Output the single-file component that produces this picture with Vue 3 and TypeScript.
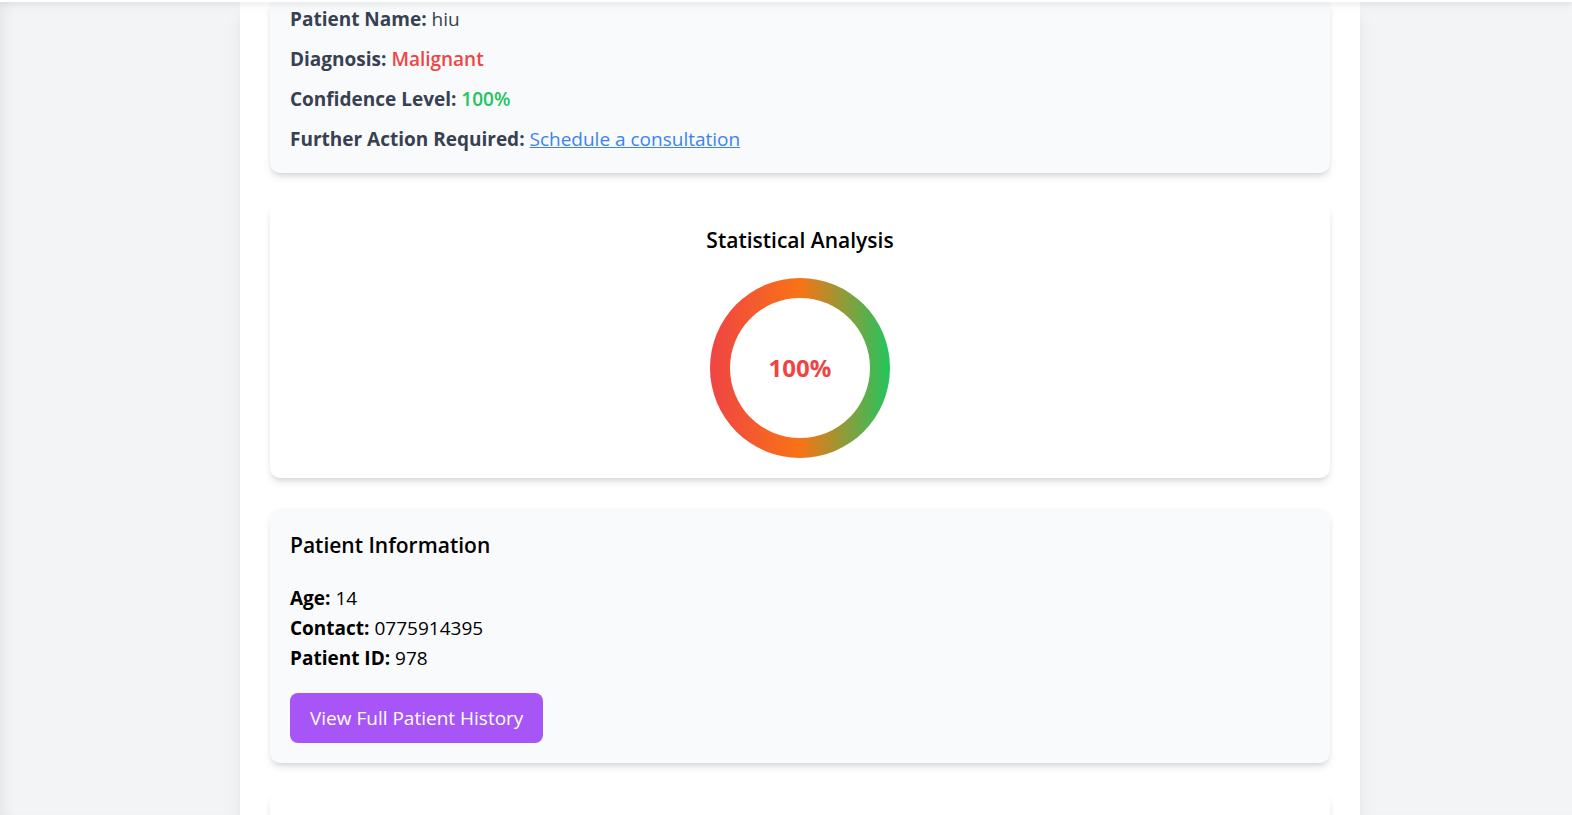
<script setup lang="ts">
interface Detail {
  label: string
  value: string
}

const patientName = 'hiu'
const diagnosis = 'Malignant'
const confidence = 100

const details: Detail[] = [
  { label: 'Age', value: '14' },
  { label: 'Contact', value: '0775914395' },
  { label: 'Patient ID', value: '978' },
]
</script>

<template>
  <div class="page">
    <header class="topbar"></header>
    <main class="content">
      <div class="panel">
        <section class="card tinted result">
          <p><strong>Patient Name:</strong> {{ patientName }}</p>
          <p><strong>Diagnosis:</strong> <span class="malignant">{{ diagnosis }}</span></p>
          <p><strong>Confidence Level:</strong> <span class="confident">{{ confidence }}%</span></p>
          <p><strong>Further Action Required:</strong> <a href="#consultation">Schedule a consultation</a></p>
        </section>

        <section class="card stats">
          <h2>Statistical Analysis</h2>
          <div class="ring">
            <div class="ring-center">{{ confidence }}%</div>
          </div>
        </section>

        <section class="card tinted">
          <h2>Patient Information</h2>
          <p v-for="item in details" :key="item.label">
            <strong>{{ item.label }}:</strong> {{ item.value }}
          </p>
          <button type="button" class="history">View Full Patient History</button>
        </section>

        <section class="card next"></section>
      </div>
    </main>
  </div>
</template>

<style>
body {
  margin: 0;
}
</style>

<style scoped>
.page {
  display: flex;
  flex-direction: column;
  height: 100vh;
  overflow: hidden;
  box-sizing: border-box;
  background: #f3f4f6;
  color: #000;
  font-family: "Segoe UI", "Open Sans", "Noto Sans", sans-serif;
  font-size: 19px;
  line-height: 30px;
}

.topbar {
  position: relative;
  flex: none;
  height: 2px;
  background: #fff;
  box-shadow: 0 0 15px rgba(0, 0, 0, 0.14), 0 2px 5px rgba(0, 0, 0, 0.12);
  z-index: 1;
}

.content {
  flex: 1;
  display: flex;
  justify-content: center;
  min-height: 0;
  padding-left: 28px;
  box-shadow: inset 12px 0 15px -10px rgba(0, 0, 0, 0.08);
}

.panel {
  display: flex;
  flex-direction: column;
  gap: 30px;
  width: 100%;
  max-width: 1120px;
  box-sizing: border-box;
  padding: 0 30px;
  background: #fff;
  box-shadow: 0 12px 19px -4px rgba(0, 0, 0, 0.1), 0 5px 8px -5px rgba(0, 0, 0, 0.1);
}

.card {
  flex: none;
  box-sizing: border-box;
  padding: 20px;
  border-radius: 10px;
  background: #fff;
  box-shadow: 0 5px 8px -1px rgba(0, 0, 0, 0.1), 0 3px 5px -2px rgba(0, 0, 0, 0.1);
}

.tinted {
  background: #f9fafb;
}

.result {
  display: flex;
  flex-direction: column;
  gap: 10px;
  padding-top: 2px;
  padding-bottom: 19px;
  border-radius: 0 0 10px 10px;
  color: #374151;
}

.next {
  flex: 1;
  border-radius: 10px 10px 0 0;
}

p {
  margin: 0;
}

strong {
  font-weight: 700;
}

h2 {
  margin: 0 0 20px;
  font-size: 21px;
  font-weight: 600;
  line-height: 35px;
}

.malignant {
  color: #ef4444;
  font-weight: 600;
}

.confident {
  color: #22c55e;
  font-weight: 600;
}

a {
  color: #3b82f6;
  text-decoration: underline;
}

.stats {
  display: flex;
  flex-direction: column;
  align-items: center;
}

.ring {
  display: flex;
  align-items: center;
  justify-content: center;
  width: 180px;
  height: 180px;
  border-radius: 50%;
  background: linear-gradient(to right, #ef4444, #f97316, #22c55e);
}

.ring-center {
  display: flex;
  align-items: center;
  justify-content: center;
  width: 140px;
  height: 140px;
  border-radius: 50%;
  background: #fff;
  color: #ef4444;
  font-size: 24px;
  font-weight: 700;
}

.history {
  display: block;
  margin-top: 20px;
  padding: 10px 20px;
  border: 0;
  border-radius: 8px;
  background: #a855f7;
  color: #fff;
  font: inherit;
  cursor: pointer;
}
</style>
